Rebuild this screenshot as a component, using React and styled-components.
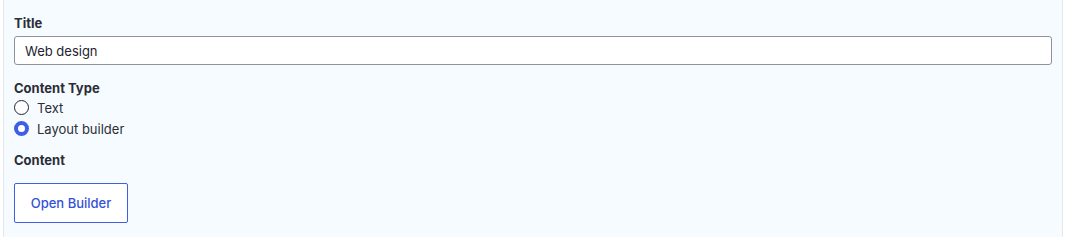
import styled, { createGlobalStyle } from "styled-components";

const GlobalStyle = createGlobalStyle`
    html, body {
        margin: 0;
        padding: 0;
        background: #ffffff;
    }

    body {
        font-family: Inter, "Liberation Sans", Arial, sans-serif;
        color: #222330;
    }
`;

const Page = styled.div`
    padding: 0 3px;
    height: 237px;
    overflow: hidden;
`;

const Panel = styled.div`
    display: flex;
    flex-direction: column;
    padding: 15px 10px 20px 10px;
    min-height: 300px;

    background: #f6fbff;
    border-left: 1px solid #e3e9ee;
    border-right: 1px solid #e3e9ee;
`;

const Field = styled.div`
    display: flex;
    flex-direction: column;
    margin-bottom: ${(p) => p.mb || 0}px;
`;

const Label = styled.div`
    font-size: 13px;
    line-height: 16px;
    font-weight: 700;
    color: #2c2d36;
    margin-bottom: ${(p) => p.mb || 0}px;
`;

const TextInput = styled.input`
    box-sizing: border-box;
    width: 100%;
    height: 29px;
    padding: 0 10px;

    font-family: inherit;
    font-size: 13px;
    color: #222330;

    background: #ffffff;
    border: 1px solid #8e929c;
    border-radius: 3px;
    outline: none;
`;

const RadioRow = styled.label`
    display: flex;
    align-items: center;
    gap: 8px;
    height: 21px;

    font-size: 13px;
    color: #2c2d36;
    cursor: pointer;
`;

const RadioDot = styled.span`
    box-sizing: border-box;
    width: 15px;
    height: 15px;
    border-radius: 50%;
    background: #ffffff;
    border: ${(p) => (p.checked ? "4px solid #3f5ee6" : "1px solid #222330")};
`;

const OutlineButton = styled.button`
    align-self: flex-start;
    box-sizing: border-box;
    width: 114px;
    height: 40px;
    padding: 0;

    font-family: inherit;
    font-size: 13px;
    font-weight: 500;
    color: #3452d9;

    background: #ffffff;
    border: 1px solid #3f5ee6;
    border-radius: 2px;
    cursor: pointer;
`;

function App() {
    return (
        <>
            <GlobalStyle />
            <Page>
                <Panel>
                    <Field mb={15}>
                        <Label mb={5}>Title</Label>
                        <TextInput defaultValue={"Web design"} />
                    </Field>

                    <Field mb={13}>
                        <Label mb={1}>Content Type</Label>
                        <RadioRow>
                            <RadioDot />
                            Text
                        </RadioRow>
                        <RadioRow>
                            <RadioDot checked />
                            Layout builder
                        </RadioRow>
                    </Field>

                    <Field>
                        <Label mb={15}>Content</Label>
                        <OutlineButton>Open Builder</OutlineButton>
                    </Field>
                </Panel>
            </Page>
        </>
    );
}

export default App;
